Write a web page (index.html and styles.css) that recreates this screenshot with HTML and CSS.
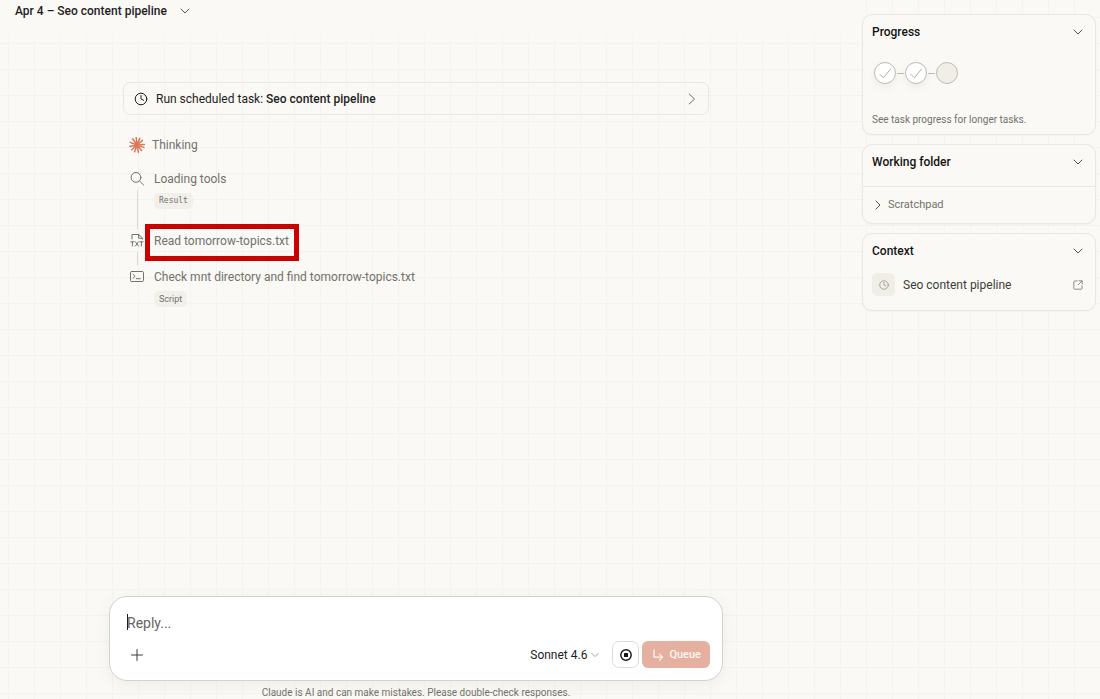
FILE: index.html
```html
<!DOCTYPE html>
<html lang="en">
<head>
<meta charset="utf-8">
<meta name="viewport" content="width=device-width, initial-scale=1">
<title>Seo content pipeline</title>
<link rel="stylesheet" href="styles.css">
</head>
<body>
<div class="app">
  <main class="main">
    <header class="topbar">
      <button class="title-button" type="button">
        <span>Apr 4 – Seo content pipeline</span>
        <svg class="chevron" viewBox="0 0 10 10"><path d="M1 3l4 4 4-4"/></svg>
      </button>
    </header>

    <section class="thread">
      <button class="task" type="button">
        <svg class="icon-clock" viewBox="0 0 14 14"><circle cx="7" cy="7" r="5.8"/><path d="M7 3.6V7l2.6 1.3"/></svg>
        <span class="task-text">Run scheduled task: <b>Seo content pipeline</b></span>
        <svg class="task-arrow" viewBox="0 0 8 12"><path d="M1.2 1l5.3 5-5.3 5"/></svg>
      </button>

      <p class="thinking">
        <svg class="burst" viewBox="0 0 16 16"><path d="M8 8L7.2.6M8 8l2.8-6.6M8 8l5.4-4.6M8 8l7.4-.6M8 8l6.8 2.4M8 8l4.6 5.4M8 8l1.4 7.2M8 8l-2.4 6.8M8 8l-5.2 4.7M8 8L.8 9.4M8 8L1 5.4M8 8L3.6 1.8"/></svg>
        <span>Thinking</span>
      </p>

      <ol class="steps">
        <li class="step step-search">
          <div class="rail">
            <svg class="step-icon" viewBox="0 0 14 17"><circle cx="6" cy="7.4" r="4.9"/><path d="M9.6 11l4 4"/></svg>
            <span class="line"></span>
          </div>
          <div class="step-body">
            <span class="label">Loading tools</span>
            <span class="pill pill-mono">Result</span>
          </div>
        </li>
        <li class="step step-read">
          <div class="rail">
            <svg class="step-icon" viewBox="0 0 14 17"><path d="M2 7V2.5h6.8L12.4 6v1.2M8.6 2.6v3.6h3.6"/><path d="M.8 9.8h3.2M2.4 9.8v4.2M5.4 9.8L8.4 14M8.4 9.8L5.4 14M9.8 9.8H13M11.4 9.8v4.2"/></svg>
            <span class="line"></span>
          </div>
          <div class="step-body">
            <span class="label marked">Read tomorrow-topics.txt</span>
          </div>
        </li>
        <li class="step">
          <div class="rail">
            <svg class="step-icon" viewBox="0 0 14 17"><rect x=".5" y="3.5" width="13" height="10" rx="1.2"/><path d="M3 6.3l2.1 2L3 10.3M6.3 10.7h4"/></svg>
          </div>
          <div class="step-body">
            <span class="label">Check mnt directory and find tomorrow-topics.txt</span>
            <span class="pill">Script</span>
          </div>
        </li>
      </ol>
    </section>

    <form class="composer">
      <div class="field">
        <textarea class="input" rows="1" placeholder="Reply..." aria-label="Reply"></textarea>
      </div>
      <div class="tools">
        <button class="plain" type="button" aria-label="Add">
          <svg class="icon-plus" viewBox="0 0 12 12"><path d="M6 .5v11M.5 6h11"/></svg>
        </button>
        <button class="model" type="button">
          <span>Sonnet 4.6</span>
          <svg class="chevron chevron-small" viewBox="0 0 10 10"><path d="M1 3l4 4 4-4"/></svg>
        </button>
        <button class="stop" type="button" aria-label="Stop">
          <svg class="icon-stop" viewBox="0 0 12 12"><circle cx="6" cy="6" r="5.2"/><rect x="4" y="4" width="4" height="4" rx=".5"/></svg>
        </button>
        <button class="queue" type="button">
          <svg class="icon-queue" viewBox="0 0 12 12"><path d="M2 .8v7.4h8.6M7.6 5.2l3 3-3 3"/></svg>
          <span>Queue</span>
        </button>
      </div>
    </form>
    <p class="notice">Claude is AI and can make mistakes. Please double-check responses.</p>
  </main>

  <aside class="side">
    <section class="card">
      <button class="card-head" type="button"><span>Progress</span><svg class="chevron" viewBox="0 0 10 10"><path d="M1 3l4 4 4-4"/></svg></button>
      <div class="progress">
        <span class="dot done"><svg class="check" viewBox="0 0 14 14"><path d="M1.8 8.2l3.6 3.6L12.6 3"/></svg></span>
        <span class="link"></span>
        <span class="dot done"><svg class="check" viewBox="0 0 14 14"><path d="M1.8 8.2l3.6 3.6L12.6 3"/></svg></span>
        <span class="link"></span>
        <span class="dot"></span>
      </div>
      <p class="hint">See task progress for longer tasks.</p>
    </section>

    <section class="card">
      <button class="card-head" type="button"><span>Working folder</span><svg class="chevron" viewBox="0 0 10 10"><path d="M1 3l4 4 4-4"/></svg></button>
      <button class="folder" type="button"><svg class="chevron chevron-right" viewBox="0 0 10 10"><path d="M3 1l4 4-4 4"/></svg><span>Scratchpad</span></button>
    </section>

    <section class="card">
      <button class="card-head" type="button"><span>Context</span><svg class="chevron" viewBox="0 0 10 10"><path d="M1 3l4 4 4-4"/></svg></button>
      <a class="context" href="#pipeline">
        <span class="tile"><svg class="tile-clock" viewBox="0 0 14 14"><circle cx="7" cy="7" r="6"/><path d="M7 3.4V7l2.6 1.4"/></svg></span>
        <span class="context-name">Seo content pipeline</span>
        <svg class="icon-open" viewBox="0 0 10 10"><path d="M4.2 1H1.6a.8.8 0 0 0-.8.8v6.6c0 .5.3.8.8.8h6.6c.5 0 .8-.3.8-.8V5.8M6 .8h3.2V4M9 1L5.4 4.6"/></svg>
      </a>
    </section>
  </aside>
</div>
</body>
</html>
```
FILE: styles.css
```css
* { box-sizing: border-box; }

body {
  margin: 0;
  background-color: #faf9f5;
  background-image:
    linear-gradient(#faf9f5 28px, #faf9f500 48px),
    linear-gradient(#f4f3ee 1px, transparent 1px),
    linear-gradient(90deg, #f4f3ee 1px, transparent 1px);
  background-size: 862px 100%, 26px 26px, 26px 26px;
  background-position: 0 0, 0 17px, 8px 0;
  background-repeat: no-repeat, repeat, repeat;
  color: #1f1e1d;
  font-family: Roboto, "Noto Sans", sans-serif;
  font-size: 12px;
  line-height: 18px;
}

p, ol { margin: 0; padding: 0; }

button, textarea {
  margin: 0;
  padding: 0;
  border: 0;
  background: none;
  color: inherit;
  font: inherit;
  text-align: left;
}

svg {
  display: block;
  flex: none;
  fill: none;
  stroke: currentColor;
  stroke-linecap: round;
  stroke-linejoin: round;
}

.app {
  display: grid;
  grid-template-columns: minmax(0, 1fr) 268px;
  height: 100vh;
  overflow: hidden;
}

.main {
  display: flex;
  flex-direction: column;
  align-items: center;
}

.topbar { align-self: stretch; padding: 2px 15px; }

.title-button {
  display: flex;
  align-items: center;
  gap: 13px;
  font-weight: 500;
}

.chevron { width: 10px; height: 10px; color: #55544f; }
.chevron-small { width: 8px; height: 8px; color: #8c8b85; }

.thread {
  flex: 1;
  width: 100%;
  max-width: 586px;
  padding-top: 60px;
}

.task {
  display: flex;
  align-items: center;
  gap: 8px;
  width: 100%;
  height: 33px;
  padding: 0 12px 0 10px;
  border: 1px solid #e8e7e1;
  border-radius: 7px;
}

.task b { font-weight: 500; }
.task-text { flex: 1; padding-top: 1px; }
.icon-clock { width: 14px; height: 14px; }
.task-arrow { width: 8px; height: 12px; color: #73726c; }

.thinking {
  display: flex;
  align-items: center;
  gap: 7px;
  padding: 21px 0 0 6px;
  color: #73726c;
}

.burst {
  width: 16px;
  height: 16px;
  color: #d97757;
  stroke-width: 1.5;
}

.steps {
  display: flex;
  flex-direction: column;
  padding: 16px 0 0 7px;
  list-style: none;
  color: #73726c;
}

.step { display: flex; gap: 10px; }
.step-search { height: 62px; }
.step-read { height: 36px; }

.rail {
  display: flex;
  flex-direction: column;
  align-items: center;
  gap: 3px;
  padding-bottom: 3px;
}

.step-icon { width: 14px; height: 17px; }
.line { flex: 1; width: 1px; background: #d9d8d2; }

.step-body {
  display: flex;
  flex-direction: column;
  align-items: flex-start;
  gap: 5px;
}

.label { position: relative; }

.marked::after {
  content: "";
  position: absolute;
  inset: -8px -10px -11px -9px;
  border: 5px solid #cb0000;
}

.pill {
  padding: 0 5px;
  border-radius: 5px;
  background: #f2f0eb;
  font-size: 9px;
  line-height: 16px;
}

.pill-mono {
  font-family: "DejaVu Sans Mono", "Liberation Mono", monospace;
  font-size: 8px;
}

.composer {
  width: 100%;
  max-width: 614px;
  padding: 17px 12px 12px 17px;
  border: 1px solid #d3d2cc;
  border-radius: 18px;
  background: #fff;
  box-shadow: 0 4px 18px #0000000d;
}

.field { position: relative; }

.field::before {
  content: "";
  position: absolute;
  top: 0;
  left: 0;
  width: 1px;
  height: 16px;
  background: #1f1e1d;
}

.input {
  display: block;
  width: 100%;
  height: 18px;
  outline: 0;
  resize: none;
  overflow: hidden;
  font-size: 14px;
}

.input::placeholder { color: #65645f; opacity: 1; }

.tools {
  display: flex;
  align-items: center;
  padding-top: 9px;
}

.plain { margin-right: auto; padding: 4px; }
.icon-plus { width: 12px; height: 12px; color: #3d3d3a; }

.model {
  display: flex;
  align-items: center;
  gap: 4px;
  margin-right: 13px;
  padding-top: 1px;
}

.stop {
  display: grid;
  place-items: center;
  width: 27px;
  height: 27px;
  margin-right: 3px;
  border: 1px solid #dddcd7;
  border-radius: 7px;
}

.icon-stop { width: 12px; height: 12px; color: #141413; stroke-width: 1.4; }
.icon-stop rect { fill: currentColor; stroke: none; }

.queue {
  display: flex;
  align-items: center;
  gap: 5px;
  height: 27px;
  padding: 0 9px 0 10px;
  border-radius: 6px;
  background: #e5b09f;
  color: #fdf6f3;
  font-size: 11px;
  font-weight: 500;
}

.icon-queue { width: 12px; height: 12px; stroke-width: 1.2; }

.notice {
  height: 18px;
  padding-top: 3px;
  color: #73726c;
  font-size: 10px;
  white-space: nowrap;
}

.side {
  display: flex;
  flex-direction: column;
  gap: 9px;
  padding: 14px 4px 0 30px;
}

.card {
  border: 1px solid #e8e7e1;
  border-radius: 10px;
  background: #faf9f5;
  box-shadow: 0 1px 2px #00000008;
}

.card-head {
  display: flex;
  align-items: center;
  justify-content: space-between;
  width: 100%;
  padding: 8px 12px 7px 9px;
  color: #141413;
  font-weight: 500;
}

.progress {
  display: flex;
  align-items: center;
  gap: 1px;
  padding: 14px 11px 0;
}

.dot {
  display: grid;
  place-items: center;
  width: 22px;
  height: 22px;
  border: 1px solid #bdbcb6;
  border-radius: 50%;
  background: #f0eee6;
}

.done { background: #fff; box-shadow: 0 3px 8px #0000000f; }
.check { width: 14px; height: 14px; color: #b0afa9; stroke-width: 1; }
.link { width: 7px; height: 1px; background: #bdbcb6; }

.hint {
  padding: 27px 9px 5px;
  color: #73726c;
  font-size: 10px;
}

.folder {
  display: flex;
  align-items: center;
  gap: 5px;
  width: 100%;
  margin-top: 8px;
  padding: 9px 10px;
  border-top: 1px solid #e8e7e1;
  color: #73726c;
  font-size: 11px;
}

.context {
  display: flex;
  align-items: center;
  gap: 8px;
  padding: 6px 12px 14px 9px;
  color: #3d3d3a;
  text-decoration: none;
}

.context-name { flex: 1; }

.tile {
  display: grid;
  place-items: center;
  width: 23px;
  height: 23px;
  border-radius: 5px;
  background: #f0eee6;
}

.tile-clock { width: 10px; height: 10px; color: #8c8b85; }
.icon-open { width: 10px; height: 10px; color: #8c8b85; }
```
